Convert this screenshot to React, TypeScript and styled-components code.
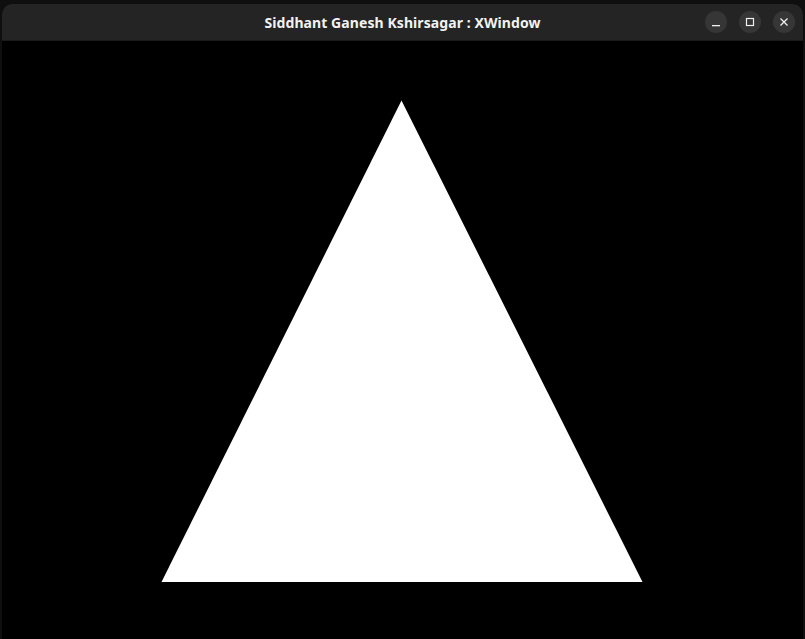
import React from "react";
import styled, { createGlobalStyle } from "styled-components";

const GlobalStyle = createGlobalStyle`
    html, body {
        margin: 0;
        padding: 0;
        background: #0f0f10;
        width: 805px;
        height: 639px;
        overflow: hidden;
    }
`;

const Desktop = styled.div`
    width: 805px;
    height: 639px;
    padding: 4px 2px 0 2px;
    box-sizing: border-box;
    display: flex;
`;

const Window = styled.div`
    flex: 1;
    display: flex;
    flex-direction: column;
    border-radius: 10px 10px 0 0;
    overflow: hidden;
    background: #000;
`;

const TitleBar = styled.div`
    height: 37px;
    flex: none;
    background: #242424;
    display: grid;
    grid-template-columns: 1fr auto 1fr;
    align-items: center;
    padding: 0 8px;
    border-bottom: 1px solid #1a1a1a;
    box-sizing: border-box;
`;

const Title = styled.h1`
    grid-column: 2;
    margin: 0;
    font-family: "Noto Sans", "DejaVu Sans", sans-serif;
    font-weight: 700;
    font-size: 14px;
    color: #f2f2f2;
    letter-spacing: 0.08px;
    white-space: nowrap;
`;

const Controls = styled.div`
    grid-column: 3;
    justify-self: end;
    display: flex;
    gap: 12px;
`;

const ControlButton = styled.div`
    width: 22px;
    height: 22px;
    border-radius: 50%;
    background: #363636;
    display: flex;
    align-items: center;
    justify-content: center;
    color: #f0f0f0;
`;

const Canvas = styled.div`
    flex: 1;
    background: #000;
`;

const Surface = styled.svg`
    display: block;
    width: 100%;
    height: 100%;
`;

const App = (): JSX.Element => (
    <>
        <GlobalStyle />
        <Desktop>
            <Window>
                <TitleBar>
                    <Title>Siddhant Ganesh Kshirsagar : XWindow</Title>
                    <Controls>
                        <ControlButton>
                            <svg width="10" height="10" viewBox="0 0 10 10">
                                <rect x="1" y="8" width="8" height="1.3" fill="currentColor" />
                            </svg>
                        </ControlButton>
                        <ControlButton>
                            <svg width="10" height="10" viewBox="0 0 10 10">
                                <rect x="1.5" y="1.5" width="7" height="7" fill="none" stroke="currentColor" strokeWidth="1.2" />
                            </svg>
                        </ControlButton>
                        <ControlButton>
                            <svg width="10" height="10" viewBox="0 0 10 10">
                                <path d="M1.5 1.5 L8.5 8.5 M8.5 1.5 L1.5 8.5" stroke="currentColor" strokeWidth="1.3" />
                            </svg>
                        </ControlButton>
                    </Controls>
                </TitleBar>
                <Canvas>
                    <Surface viewBox="0 0 801 598" preserveAspectRatio="none">
                        <polygon points="399.5,59.5 159.5,541 640.5,541" fill="#ffffff" />
                    </Surface>
                </Canvas>
            </Window>
        </Desktop>
    </>
);

export default App;
